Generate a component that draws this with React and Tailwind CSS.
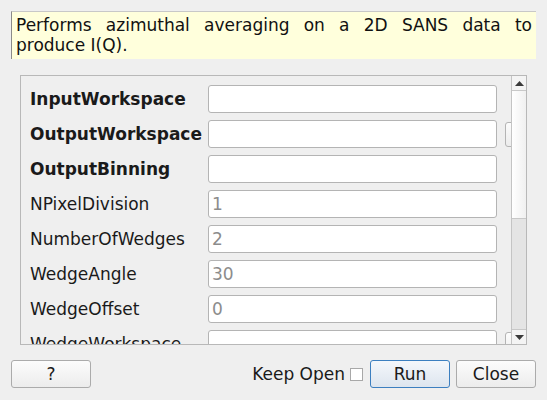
const rows = [
  { label: "InputWorkspace", bold: true, value: "" },
  { label: "OutputWorkspace", bold: true, value: "", browse: true },
  { label: "OutputBinning", bold: true, value: "" },
  { label: "NPixelDivision", value: "1" },
  { label: "NumberOfWedges", value: "2" },
  { label: "WedgeAngle", value: "30" },
  { label: "WedgeOffset", value: "0" },
  { label: "WedgeWorkspace", value: "", browse: true },
];

function QtButton({ children, primary, className = "" }) {
  return (
    <button
      type="button"
      className={`h-[28px] w-[80px] rounded-[3px] border pt-[1px] text-[17px] text-[#1a1a1a] ${
        primary
          ? "border-[#3c7fc0] bg-gradient-to-b from-[#f4f7fb] to-[#dde5ee]"
          : "border-[#ababab] bg-gradient-to-b from-[#fcfcfc] to-[#ececec]"
      } ${className}`}
    >
      {children}
    </button>
  );
}

function Row({ row }) {
  return (
    <div className="flex h-[28px] shrink-0 items-center">
      <div
        className={`w-[178px] shrink-0 whitespace-nowrap pt-[2px] text-[17px] text-[#1a1a1a] ${
          row.bold ? "font-bold" : ""
        }`}
      >
        {row.label}
      </div>
      <div className="flex h-[28px] w-[289px] shrink-0 items-center rounded-[3px] border border-[#b4b4b4] bg-white pl-[3px] pt-[1px] text-[17px] text-[#8c8c8c]">
        {row.value}
      </div>
      {row.browse && (
        <div className="ml-[8px] mt-[2px] h-[25px] w-[24px] shrink-0 self-start rounded-[3px] border border-[#b4b4b4] bg-gradient-to-b from-[#fcfcfc] to-[#ececec]" />
      )}
    </div>
  );
}

function ScrollBar() {
  return (
    <div className="flex w-[15px] shrink-0 flex-col border-l border-[#c4c4c4] bg-[#e4e4e4]">
      <div className="flex h-[15px] shrink-0 items-center justify-center border-b border-[#c8c8c8] bg-[#f4f4f4]">
        <svg width="9" height="5" viewBox="0 0 9 5">
          <path d="M0 5 L4.5 0 L9 5 Z" fill="#3a3a3a" />
        </svg>
      </div>
      <div className="h-[128px] shrink-0 border-b border-[#c8c8c8] bg-gradient-to-r from-[#ffffff] to-[#f0f0f0]" />
      <div className="flex-1" />
      <div className="flex h-[15px] shrink-0 items-center justify-center border-t border-[#c8c8c8] bg-[#f4f4f4]">
        <svg width="9" height="5" viewBox="0 0 9 5">
          <path d="M0 0 L9 0 L4.5 5 Z" fill="#3a3a3a" />
        </svg>
      </div>
    </div>
  );
}

export default function App() {
  return (
    <div
      className="flex h-[400px] w-[547px] flex-col overflow-hidden bg-[#efefef] pl-[11px] pr-[11px] pt-[11px]"
      style={{ fontFamily: '"DejaVu Sans", sans-serif' }}
    >
      <div className="h-[48px] shrink-0 border-l border-t border-l-[#8a8a8a] border-t-[#c8c8c8] bg-[#ffffdc] pl-[4px] pr-[4px] pt-[3px] text-justify text-[17px] leading-[20px] text-[#111]">
        Performs azimuthal averaging on a 2D SANS data to produce I(Q).
      </div>

      <div className="ml-[9px] mr-[9px] mt-[16px] flex h-[270px] shrink-0 border border-[#b8b8b8]">
        <div className="flex min-w-0 flex-1 flex-col gap-[7px] overflow-hidden pl-[9px] pt-[9px]">
          {rows.map((r) => (
            <Row key={r.label} row={r} />
          ))}
        </div>
        <ScrollBar />
      </div>

      <div className="mt-[15px] flex h-[28px] shrink-0 items-center">
        <QtButton>?</QtButton>
        <div className="flex-1" />
        <span className="pt-[2px] text-[17px] text-[#1a1a1a]">Keep Open</span>
        <div className="ml-[5px] h-[13px] w-[13px] border border-[#a8a8a8] bg-white" />
        <QtButton primary className="ml-[7px]">
          Run
        </QtButton>
        <QtButton className="ml-[6px]">Close</QtButton>
      </div>
    </div>
  );
}
